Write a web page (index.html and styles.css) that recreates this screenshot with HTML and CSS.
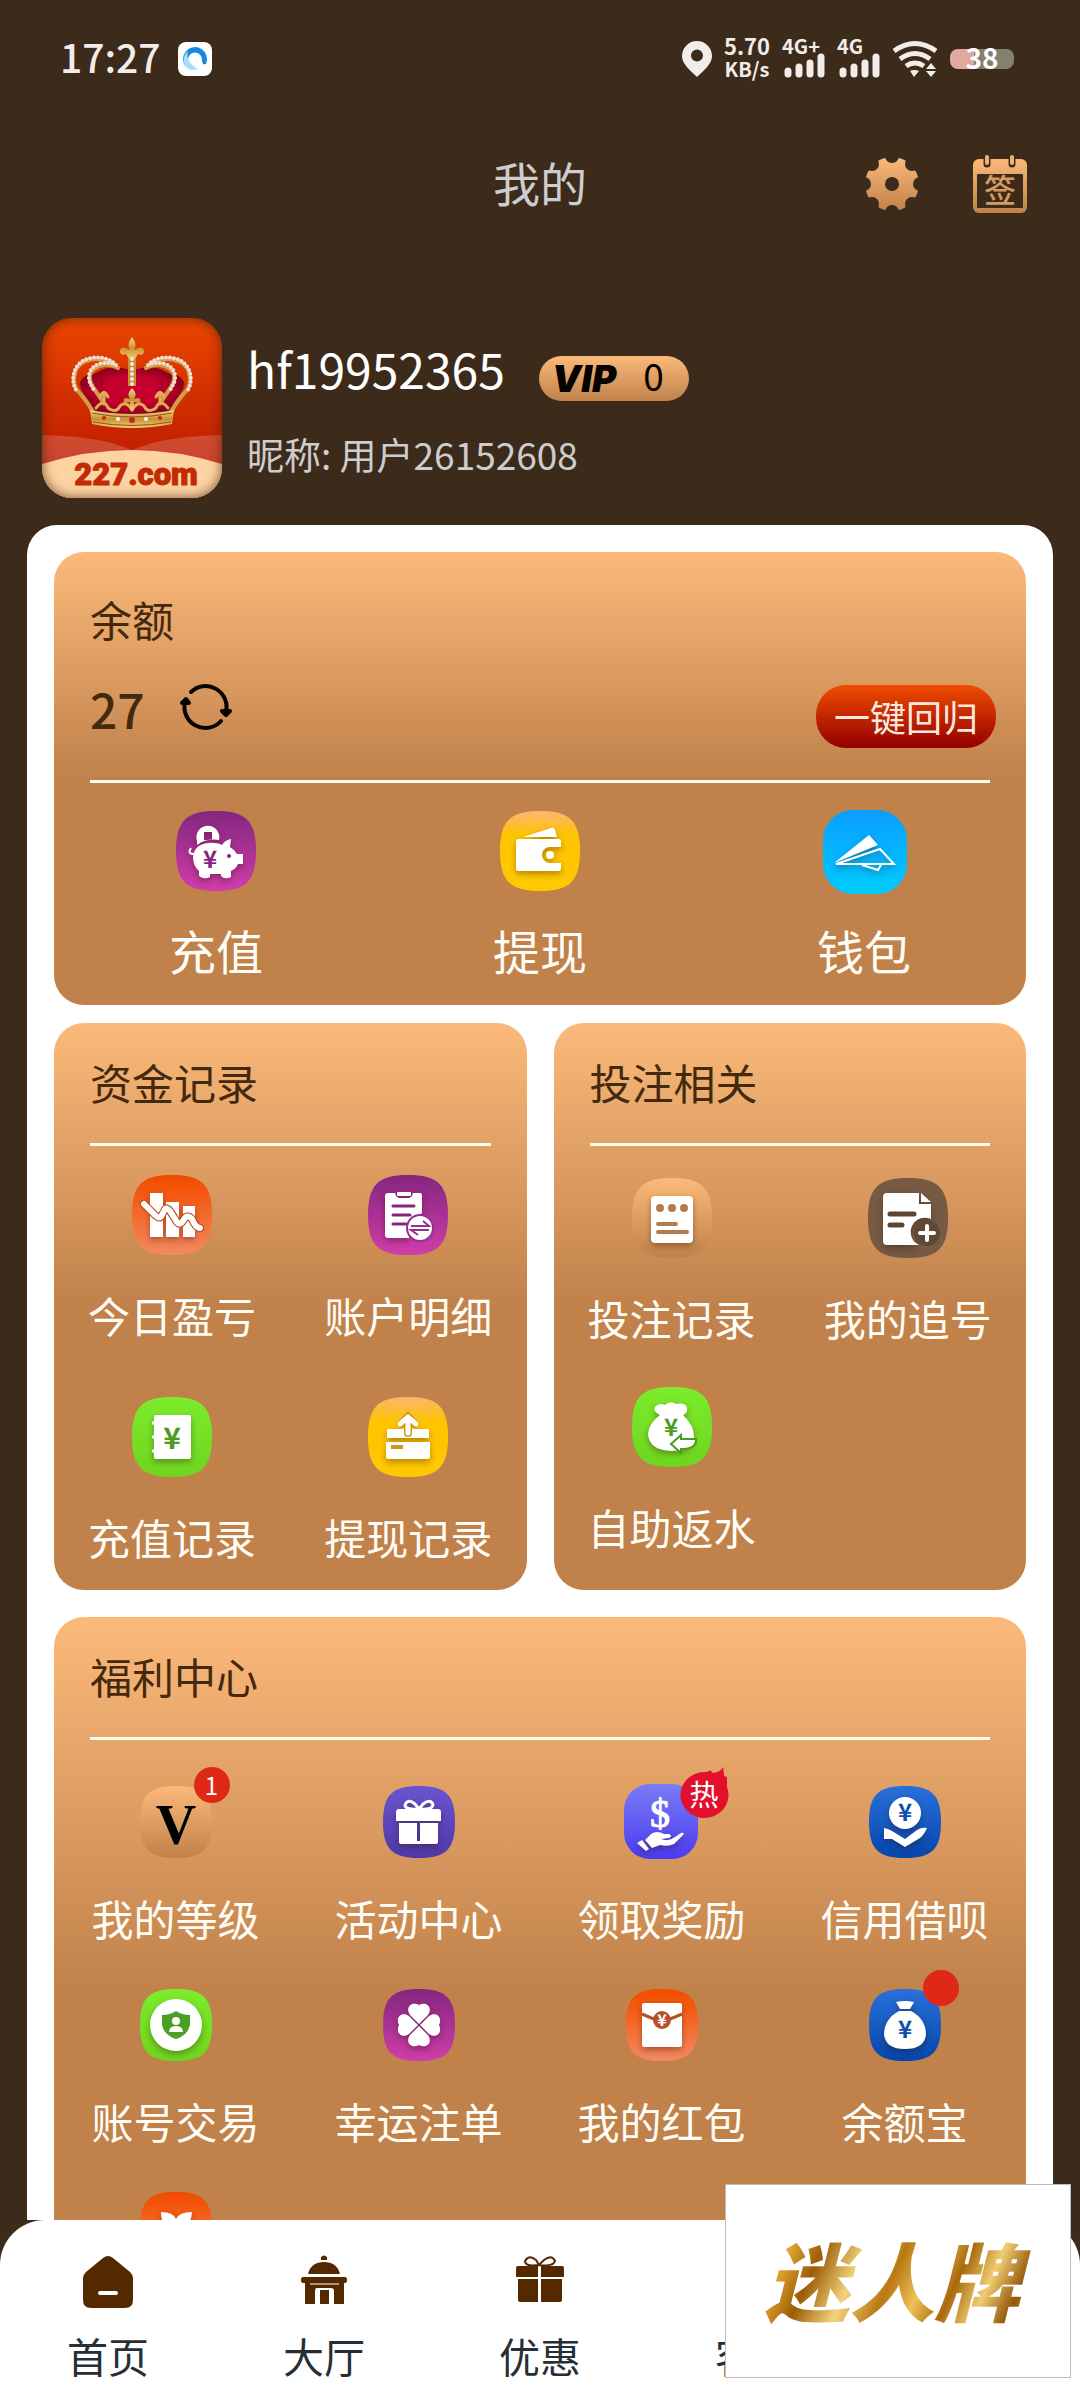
FILE: index.html
```html
<!DOCTYPE html>
<html lang="zh-CN">
<head>
    <meta charset="UTF-8">
    <meta name="viewport" content="width=device-width, initial-scale=1.0">
    <title>我的</title>
    <link rel="stylesheet" href="styles.css">
</head>
<body>
    <!-- 公共渐变和图标底板 -->
    <svg class="svg-defs" width="0" height="0" aria-hidden="true">
        <defs>
            <linearGradient id="g-gold" x1="0" y1="0" x2="0" y2="1"><stop offset="0" stop-color="#fbba7a"/><stop offset="1" stop-color="#c0814b"/></linearGradient>
            <linearGradient id="g-purple" x1="0" y1="0" x2="0" y2="1"><stop offset="0" stop-color="#84267f"/><stop offset="1" stop-color="#d03daa"/></linearGradient>
            <linearGradient id="g-yellow" x1="0" y1="0" x2="0" y2="1"><stop offset="0" stop-color="#fbb574"/><stop offset=".3" stop-color="#ffc400"/><stop offset="1" stop-color="#ffc800"/></linearGradient>
            <linearGradient id="g-sky" x1="0" y1="0" x2="0" y2="1"><stop offset="0" stop-color="#0a9dff"/><stop offset="1" stop-color="#00ccff"/></linearGradient>
            <linearGradient id="g-orange" x1="0" y1="0" x2="0" y2="1"><stop offset="0" stop-color="#f04d00"/><stop offset=".2" stop-color="#f4560d"/><stop offset="1" stop-color="#f28a62"/></linearGradient>
            <linearGradient id="g-green" x1="0" y1="0" x2="0" y2="1"><stop offset="0" stop-color="#7cec2c"/><stop offset="1" stop-color="#6fd41f"/></linearGradient>
            <linearGradient id="g-violet" x1="0" y1="0" x2="0" y2="1"><stop offset="0" stop-color="#6a55cf"/><stop offset="1" stop-color="#4f38a6"/></linearGradient>
            <linearGradient id="g-indigo" x1="0" y1="0" x2="0" y2="1"><stop offset="0" stop-color="#7b7bf5"/><stop offset="1" stop-color="#4a3cf0"/></linearGradient>
            <linearGradient id="g-blue" x1="0" y1="0" x2="0" y2="1"><stop offset="0" stop-color="#2a70da"/><stop offset="1" stop-color="#0546ac"/></linearGradient>
            <linearGradient id="g-red" x1="0" y1="0" x2="0" y2="1"><stop offset="0" stop-color="#ea4600"/><stop offset="1" stop-color="#b31200"/></linearGradient>
            <linearGradient id="g-crown" x1="0" y1="0" x2="0" y2="1"><stop offset="0" stop-color="#f6d98c"/><stop offset=".5" stop-color="#c98f35"/><stop offset="1" stop-color="#f3cf75"/></linearGradient>
            <radialGradient id="g-velvet"><stop offset="0" stop-color="#c80030"/><stop offset=".6" stop-color="#c4002c"/><stop offset="1" stop-color="#8f001d"/></radialGradient>
        </defs>
        <symbol id="tile" viewBox="0 0 80 80">
            <path d="M40 0C70 0 80 10 80 40S70 80 40 80 0 70 0 40 10 0 40 0Z"/>
        </symbol>
    </svg>

    <div class="app">
        <!-- 状态栏 -->
        <div class="status-bar">
            <div class="status-left">
                <span class="status-time">17:27</span>
                <svg width="34" height="34" viewBox="0 0 34 34">
                    <rect width="34" height="34" rx="8" fill="#fff"/>
                    <path d="M8 25A12 12 0 1 1 28 22C25 23 24 21 24 18A7 7 0 0 0 10 17C9 20 10 23 8 25Z" fill="#1b86e2"/>
                    <path d="M8 25C4 19 6 12 10 9C8 15 11 22 20 27C15 29 11 28 8 25Z" fill="#a9defb"/>
                </svg>
            </div>
            <div class="status-right">
                <svg width="30" height="36" viewBox="0 0 30 36"><path fill="#f2ecea" fill-rule="evenodd" d="M15 0A15 15 0 0 1 30 15C30 23 22 29 15 36C8 29 0 23 0 15A15 15 0 0 1 15 0ZM15 8.500A6 6 0 1 0 15 20.500A6 6 0 1 0 15 8.500Z"/></svg>
                <div class="net-speed"><span>5.70</span><span>KB/s</span></div>
                <svg class="signal" width="43" height="38" viewBox="0 0 43 38">
                    <text x="0" y="14">4G+</text>
                    <path d="M6 31V34M17 27V34M28 23V34M39 17V34"/>
                </svg>
                <svg class="signal" width="43" height="38" viewBox="0 0 43 38">
                    <text x="0" y="14">4G</text>
                    <path d="M6 31V34M17 27V34M28 23V34M39 17V34"/>
                </svg>
                <svg width="46" height="38" viewBox="0 0 46 38" fill="none" stroke="#f2ecea" stroke-width="5">
                    <path d="M2 11Q23 -4 44 11M8 19Q23 8 38 19M14 26Q23 20 32 26"/>
                    <path d="M18 31Q22 29 27 31L22 37ZM34 29L39 23L44 29ZM34 31H44L39 37Z" fill="#f2ecea" stroke="none"/>
                </svg>
                <div class="battery">38</div>
            </div>
        </div>

        <!-- 标题栏 -->
        <header class="app-bar">
            <h1>我的</h1>
            <div class="app-actions">
                <button class="icon-btn" aria-label="设置">
                    <svg width="54" height="54" viewBox="0 0 54 54">
                        <circle cx="27" cy="27" r="27" fill="url(#g-gold)"/>
                        <g fill="#3c2b1b">
                            <circle cx="27" cy="27" r="7"/>
                            <circle cx="27" cy="-1" r="7"/><circle cx="27" cy="55" r="7"/>
                            <circle cx="-1" cy="27" r="7"/><circle cx="55" cy="27" r="7"/>
                            <circle cx="7" cy="7" r="7"/><circle cx="47" cy="7" r="7"/>
                            <circle cx="7" cy="47" r="7"/><circle cx="47" cy="47" r="7"/>
                        </g>
                    </svg>
                </button>
                <button class="icon-btn" aria-label="签到">
                    <svg width="54" height="58" viewBox="0 0 54 58">
                        <rect y="4" width="54" height="54" rx="6" fill="url(#g-gold)"/>
                        <rect x="4" y="19" width="46" height="34" rx="1" fill="#3c2b1b"/>
                        <path d="M14 2V9M39 2V9" stroke="#3c2b1b" stroke-width="7" stroke-linecap="round"/>
                        <path d="M14 2V8M39 2V8" stroke="#efb076" stroke-width="4" stroke-linecap="round"/>
                        <text class="sign-text" x="27" y="47">签</text>
                    </svg>
                </button>
            </div>
        </header>

        <main class="content">
            <!-- 用户信息 -->
            <section class="profile">
                <div class="avatar">
                    <svg width="180" height="180" viewBox="0 0 180 180">
                        <rect width="180" height="180" fill="url(#g-red)"/>
                        <path d="M0 117Q60 118 92 133L180 160V180H0Z" fill="#fff" fill-opacity=".18"/>
                        <path d="M180 117Q120 118 88 133L0 160V180H180Z" fill="#fff" fill-opacity=".18"/>
                        <path d="M0 146Q90 118 180 146V180H0Z" fill="#fdd3a2"/>
                        <path d="M38 64C44 54 50 58 56 54C68 46 80 50 90 52C100 50 112 46 124 54C130 58 136 54 142 64C142 76 132 80 128 96H52C48 80 38 76 38 64Z" fill="url(#g-velvet)"/>
                        <path d="M60 62Q58 78 66 92M120 62Q122 78 114 92" fill="none" stroke="#7d0019" stroke-opacity=".5" stroke-width="2"/>
                        <g id="crown-side" fill="none" stroke-linecap="round">
                            <path d="M76 50C66 40 52 39 42 44C30 50 30 66 36 73C42 80 46 84 52 96M76 50C64 44 51 48 48 57C46 66 54 72 61 84" stroke="#d39b45" stroke-width="4"/>
                            <path d="M74 47C66 38 52 38 42 42C30 49 29 64 34 72M74 47C62 42 49 46 47 57C46 64 50 68 53 74" stroke="#f4dcd8" stroke-width="4" stroke-dasharray="0 4"/>
                            <path d="M54 90Q62 80 66 90Q74 96 78 88Q84 82 90 92M62 86V76M58 79Q62 70 66 79" stroke="#dfae54" stroke-width="3"/>
                        </g>
                        <use href="#crown-side" transform="matrix(-1 0 0 1 180 0)"/>
                        <path d="M90 19Q96 27 92 32Q102 26 102 34Q101 38 96 36L93 41H87L84 36Q79 38 78 34Q78 26 88 32Q84 27 90 19Z" fill="url(#g-crown)"/>
                        <path d="M90 40V68" stroke="#c98f35" stroke-width="8"/>
                        <path d="M90 41V68" stroke="#f8e6e2" stroke-width="4" stroke-linecap="round" stroke-dasharray="0 5"/>
                        <path d="M90 70Q96 76 92 81Q100 78 98 85L92 84V92H88V84L82 85Q80 78 88 81Q84 76 90 70Z" fill="url(#g-crown)"/>
                        <path d="M48 92Q90 100 132 92L130 106Q90 114 50 106Z" fill="url(#g-crown)"/>
                        <path d="M50 95Q90 103 130 95M51 104Q90 111 129 104" fill="none" stroke="#8f5716"/>
                        <g fill="#c12b16"><circle cx="62" cy="100" r="2"/><circle cx="90" cy="102" r="3"/><circle cx="118" cy="100" r="2"/></g>
                        <g fill="#fff1e0"><circle cx="76" cy="101" r="2"/><circle cx="104" cy="101" r="2"/></g>
                        <text class="avatar-text" x="94" y="167">227.com</text>
                    </svg>
                </div>
                <div class="profile-info">
                    <div class="name-row">
                        <span class="username">hf19952365</span>
                        <span class="vip-badge"><i>VIP</i><span>0</span></span>
                    </div>
                    <div class="nickname">昵称: 用户26152608</div>
                </div>
            </section>

            <div class="panel">
                <!-- 余额 -->
                <section class="card balance">
                    <h2>余额</h2>
                    <div class="balance-row">
                        <span class="amount">27</span>
                        <button class="icon-btn refresh" aria-label="刷新">
                            <svg width="52" height="44" viewBox="0 2 52 44" fill="none" stroke="#050200" stroke-width="4" stroke-linecap="round">
                                <path d="M11 9A21 21 0 0 1 46 29M41 38A21 21 0 0 1 5 19"/>
                                <path d="M42 28L46 32L50 28ZM2 20L6 16L9 20Z" fill="#050200" stroke-linejoin="round"/>
                            </svg>
                        </button>
                        <button class="return-btn">一键回归</button>
                    </div>
                    <div class="grid grid-3">
                        <a class="item" href="#">
                            <svg class="icon" viewBox="0 0 80 80">
                                <use href="#tile" fill="url(#g-purple)"/>
                                <g class="glyph">
                                    <path fill-rule="evenodd" d="M21 30A11.500 11.500 0 1 1 43 29Q31 27 21 34ZM28 21V29H36V21Z"/>
                                    <path d="M17 46C18 30 38 30 46 34Q49 29 55 28L54 36Q59 39 61 43H67V53H62Q60 58 55 60V66Q49 69 45 65V63H34V66Q28 69 23 65V60Q17 55 17 46Z"/>
                                    <path d="M18 43Q11 43 15 37" fill="none" stroke="#fff" stroke-width="2"/>
                                </g>
                                <circle cx="53" cy="45" r="2" fill="#84267f"/>
                                <text class="yen yen-purple" x="34" y="57">¥</text>
                            </svg>
                            <span>充值</span>
                        </a>
                        <a class="item" href="#">
                            <svg class="icon" viewBox="0 0 80 80">
                                <use href="#tile" fill="url(#g-yellow)"/>
                                <g class="glyph">
                                    <path d="M23 26L51 17Q54 16 55 19L57 26Z"/>
                                    <path d="M18 28H59Q61 28 61 30V36H50A8 8 0 0 0 50 52H61V57Q61 60 59 60H18Q16 60 16 57V31Q16 28 18 28Z"/>
                                    <circle cx="50" cy="44" r="4"/>
                                </g>
                            </svg>
                            <span>提现</span>
                        </a>
                        <a class="item" href="#">
                            <svg class="icon" viewBox="0 0 80 80">
                                <rect x="-1" y="-1" width="84" height="84" rx="30" fill="url(#g-sky)"/>
                                <g class="glyph">
                                    <path d="M45 24L10 52L54 34Z"/>
                                    <path d="M12 53L56 38L70 53ZM38 54L54 59L57 54" fill="none" stroke="#fff" stroke-width="2"/>
                                </g>
                            </svg>
                            <span>钱包</span>
                        </a>
                    </div>
                </section>

                <div class="card-row">
                    <!-- 资金记录 -->
                    <section class="card funds">
                        <h2>资金记录</h2>
                        <div class="grid grid-2">
                            <a class="item" href="#">
                                <svg class="icon" viewBox="0 0 80 80">
                                    <use href="#tile" fill="url(#g-orange)"/>
                                    <g class="glyph"><path d="M18 18H31V62H18ZM34 27H47V62H34ZM51 31H63V62H51Z"/></g>
                                    <g fill="none" stroke-linecap="round" stroke-linejoin="round">
                                        <path d="M12 29L23 40Q28 45 30 40L32 36Q34 31 38 36L45 47Q48 51 51 46Q55 38 60 44Q63 52 68 53" stroke="#b8481c" stroke-width="8"/>
                                        <path d="M12 29L23 40Q28 45 30 40L32 36Q34 31 38 36L45 47Q48 51 51 46Q55 38 60 44Q63 52 68 53" stroke="#fff" stroke-width="6"/>
                                    </g>
                                </svg>
                                <span>今日盈亏</span>
                            </a>
                            <a class="item" href="#">
                                <svg class="icon" viewBox="0 0 80 80">
                                    <use href="#tile" fill="url(#g-purple)"/>
                                    <g class="glyph"><path d="M20 18H27Q28 23 32 23H40Q44 23 45 18H52Q54 18 54 20V38L41 50V63H20Q17 63 17 60V21Q17 18 20 18Z"/><rect x="29" y="17" width="14" height="4" rx="1"/></g>
                                    <path d="M25 31H46M25 40H42M25 49H38" stroke="#84267f" stroke-width="3" stroke-linecap="round"/>
                                    <circle cx="52" cy="53" r="13" fill="#fff" stroke="#96308f" stroke-width="2"/>
                                    <path d="M43 51H61L55 46M61 55H43L50 60" fill="none" stroke="#96308f" stroke-width="2"/>
                                </svg>
                                <span>账户明细</span>
                            </a>
                            <a class="item" href="#">
                                <svg class="icon" viewBox="0 0 80 80">
                                    <use href="#tile" fill="url(#g-green)"/>
                                    <g class="glyph"><rect x="22" y="18" width="37" height="44" rx="2"/><circle cx="22" cy="26" r="2"/><circle cx="22" cy="40" r="2"/><circle cx="22" cy="54" r="2"/></g>
                                    <text class="yen yen-green yen-lg" x="40" y="52">¥</text>
                                </svg>
                                <span>充值记录</span>
                            </a>
                            <a class="item" href="#">
                                <svg class="icon" viewBox="0 0 80 80">
                                    <use href="#tile" fill="url(#g-yellow)"/>
                                    <g class="glyph"><path d="M19 32H61V41H19ZM18 45H62V60Q62 62 60 62H20Q18 62 18 60Z"/></g>
                                    <path d="M40 36V22M33 27L40 20L47 27" fill="none" stroke="#c89a12" stroke-width="8" stroke-linecap="round"/>
                                    <path d="M40 36V22M32 27L40 20L48 27" fill="none" stroke="#fff" stroke-width="5" stroke-linecap="round"/>
                                    <path d="M23 48H35V52H23Z" fill="#c89a12"/>
                                </svg>
                                <span>提现记录</span>
                            </a>
                        </div>
                    </section>

                    <!-- 投注相关 -->
                    <section class="card bets">
                        <h2>投注相关</h2>
                        <div class="grid grid-2">
                            <a class="item" href="#">
                                <svg class="icon" viewBox="0 0 80 80">
                                    <use href="#tile" fill="url(#g-gold)"/>
                                    <g class="glyph"><rect x="19" y="18" width="42" height="47" rx="4"/></g>
                                    <g fill="#b07c4e"><circle cx="28" cy="30" r="4"/><circle cx="40" cy="30" r="4"/><circle cx="52" cy="30" r="4"/></g>
                                    <path d="M26 46H44M26 54H55" stroke="#b07c4e" stroke-width="4" stroke-linecap="round"/>
                                </svg>
                                <span>投注记录</span>
                            </a>
                            <a class="item" href="#">
                                <svg class="icon" viewBox="0 0 80 80">
                                    <use href="#tile" fill="#765a43"/>
                                    <g class="glyph"><path d="M19 15H51V26H63V41A14 14 0 0 0 51 67H19Q15 67 15 63V19Q15 15 19 15ZM53 15L63 24H53Z"/></g>
                                    <path d="M22 36H46M22 47H34" stroke="#5b4533" stroke-width="5" stroke-linecap="round"/>
                                    <circle cx="59" cy="55" r="13" fill="#5f4835"/>
                                    <path d="M59 48V62M52 55H66" stroke="#fff" stroke-width="4" stroke-linecap="round"/>
                                </svg>
                                <span>我的追号</span>
                            </a>
                            <a class="item" href="#">
                                <svg class="icon" viewBox="0 0 80 80">
                                    <use href="#tile" fill="url(#g-green)"/>
                                    <g class="glyph"><path d="M28 28Q21 25 23 20Q27 15 33 18Q38 13 44 17Q54 15 55 21Q56 26 51 28Q63 39 62 52Q57 64 39 64Q17 63 16 47Q17 36 28 28Z"/></g>
                                    <text class="yen yen-green" x="39" y="49">¥</text>
                                    <path d="M39 57L49 48V52H64Q65 62 49 62V66Z" fill="#fff" stroke="#4d9a1f" stroke-width="2"/>
                                </svg>
                                <span>自助返水</span>
                            </a>
                        </div>
                    </section>
                </div>

                <!-- 福利中心 -->
                <section class="card welfare">
                    <h2>福利中心</h2>
                    <div class="grid grid-4">
                        <a class="item" href="#">
                            <span class="icon-wrap">
                                <svg class="icon" viewBox="0 0 72 72">
                                    <use href="#tile" fill="url(#g-gold)"/>
                                    <text class="level-v" x="36" y="58">V</text>
                                </svg>
                                <b class="badge">1</b>
                            </span>
                            <span>我的等级</span>
                        </a>
                        <a class="item" href="#">
                            <svg class="icon" viewBox="0 0 72 72">
                                <use href="#tile" fill="url(#g-violet)"/>
                                <g class="glyph">
                                    <path d="M16 23H55Q58 23 58 26V35H13V26Q13 23 16 23ZM16 37H34V55H37V37H55V56Q55 58 53 58H18Q16 58 16 56Z"/>
                                    <path d="M36 23Q22 24 22 19Q25 12 32 18L36 23L40 18Q48 12 50 19Q49 24 36 23" fill="none" stroke="#fff" stroke-width="3"/>
                                </g>
                            </svg>
                            <span>活动中心</span>
                        </a>
                        <a class="item" href="#">
                            <span class="icon-wrap">
                                <svg class="icon" viewBox="0 0 72 72">
                                    <rect x="-2" y="-2" width="74" height="75" rx="26" fill="url(#g-indigo)"/>
                                    <text class="dollar" x="34" y="41">$</text>
                                    <g class="glyph"><path d="M25 48Q31 44 38 48H43Q47 50 43 52L35 53Q43 56 49 51L55 47Q59 46 57 49L48 58Q42 61 34 59L26 62L19 54ZM16 54L23 63L20 65L11 57Z"/></g>
                                </svg>
                                <svg class="hot" width="48" height="51" viewBox="0 0 48 51">
                                    <path d="M24 5Q29 5 30 3L33 6Q41 5 43 0Q44 6 44 9L47 10V20A24 23 0 1 1 24 5Z" fill="#e20f2d"/>
                                    <text x="24" y="39">热</text>
                                </svg>
                            </span>
                            <span>领取奖励</span>
                        </a>
                        <a class="item" href="#">
                            <svg class="icon" viewBox="0 0 72 72">
                                <use href="#tile" fill="url(#g-blue)"/>
                                <g class="glyph"><circle cx="36" cy="27" r="16"/><path d="M15 42Q20 43 23 45L36 53L48 44Q53 41 58 42Q55 49 51 52L36 61L23 53L15 53Z"/></g>
                                <text class="yen yen-blue" x="36" y="35">¥</text>
                            </svg>
                            <span>信用借呗</span>
                        </a>
                        <a class="item" href="#">
                            <svg class="icon" viewBox="0 0 72 72">
                                <use href="#tile" fill="url(#g-green)"/>
                                <g class="glyph"><circle cx="36" cy="36" r="26"/></g>
                                <path d="M36 22Q42 26 50 26V36Q48 46 36 50Q24 46 22 36V26Q30 26 36 22Z" fill="#4c9f22"/>
                                <circle cx="36" cy="32" r="4" fill="#fff"/><path d="M29 43Q29 37 36 37T43 43Z" fill="#fff"/>
                            </svg>
                            <span>账号交易</span>
                        </a>
                        <a class="item" href="#">
                            <svg class="icon" viewBox="0 0 72 72">
                                <use href="#tile" fill="url(#g-purple)"/>
                                <g class="glyph">
                                    <path id="petal" d="M36 35L27 26C22 19 28 12 36 16C44 12 50 19 45 26Z"/>
                                    <use href="#petal" transform="rotate(90 36 36)"/>
                                    <use href="#petal" transform="rotate(180 36 36)"/>
                                    <use href="#petal" transform="rotate(270 36 36)"/>
                                </g>
                            </svg>
                            <span>幸运注单</span>
                        </a>
                        <a class="item" href="#">
                            <svg class="icon" viewBox="0 0 72 72">
                                <use href="#tile" fill="url(#g-orange)"/>
                                <g class="glyph"><rect x="16" y="14" width="40" height="44" rx="2"/></g>
                                <path d="M16 25L30 31H42L56 25" fill="none" stroke="#b64f2b" stroke-width="3"/>
                                <circle cx="36" cy="31" r="9" fill="#b64f2b"/>
                                <text class="yen yen-white yen-sm" x="36" y="37">¥</text>
                            </svg>
                            <span>我的红包</span>
                        </a>
                        <a class="item" href="#">
                            <span class="icon-wrap">
                                <svg class="icon" viewBox="0 0 72 72">
                                    <use href="#tile" fill="url(#g-blue)"/>
                                    <g class="glyph"><path d="M27 13Q36 11 45 13L41 20H31ZM30 22H42Q57 30 57 46Q55 60 36 60T15 46Q15 30 30 22Z"/></g>
                                    <text class="yen yen-blue" x="36" y="49">¥</text>
                                </svg>
                                <b class="badge"></b>
                            </span>
                            <span>余额宝</span>
                        </a>
                        <a class="item" href="#" aria-label="更多福利">
                            <svg class="icon" viewBox="0 0 72 72">
                                <use href="#tile" fill="url(#g-orange)"/>
                                <g class="glyph"><path d="M21 20Q33 20 36 27Q39 20 52 20Q51 36 38 38V56H34V38Q21 36 21 20Z"/></g>
                            </svg>
                        </a>
                    </div>
                </section>
            </div>
        </main>

        <!-- 底部导航 -->
        <nav class="tab-bar">
            <a class="tab" href="#">
                <svg width="54" height="54" viewBox="0 0 54 54">
                    <path d="M22 3Q27 -1 32 3L49 17Q52 20 52 23V45Q52 53 44 53H10Q2 53 2 45V23Q2 20 5 17Z" fill="#552900"/>
                    <path d="M19 38H35" stroke="#fff" stroke-width="4" stroke-linecap="round"/>
                </svg>
                <span>首页</span>
            </a>
            <a class="tab" href="#">
                <svg width="54" height="54" viewBox="0 0 54 54" fill="#552900">
                    <path d="M24 5V2Q27 -1 30 2V5ZM11 19Q14 7 27 7T43 19ZM6 22H48Q50 22 50 25T48 28H47V49H37V36Q37 33 34 33H20Q18 33 18 36V49H8V28H6Q4 28 4 25T6 22ZM23 35H32V49H23Z"/>
                    <path d="M13 29H42" stroke="#fff"/>
                </svg>
                <span>大厅</span>
            </a>
            <a class="tab" href="#">
                <svg width="54" height="54" viewBox="0 0 54 54" fill="#552900">
                    <path d="M5 11H25V22H3V13Q3 11 5 11ZM28 11H49Q51 11 51 13V22H28ZM5 24H25V47H7Q5 47 5 45ZM28 24H49V45Q49 47 47 47H28Z"/>
                    <path d="M26 10Q12 12 12 6Q16 -1 23 5L26 10L31 5Q39 -1 42 6Q40 12 26 10" fill="none" stroke="#552900" stroke-width="2"/>
                </svg>
                <span>优惠</span>
            </a>
            <a class="tab" href="#">
                <svg width="54" height="54" viewBox="0 0 54 54" fill="none" stroke="#552900" stroke-width="5"><path d="M8 34V24A19 19 0 0 1 46 24V34M46 34Q44 46 30 46"/></svg>
                <span>客服</span>
            </a>
            <a class="tab" href="#">
                <svg width="54" height="54" viewBox="0 0 54 54" fill="#552900"><circle cx="27" cy="14" r="11"/><path d="M6 48Q6 28 27 28T48 48Z"/></svg>
                <span>我的</span>
            </a>
        </nav>

        <!-- 悬浮广告 -->
        <div class="float-logo"><span>迷人牌</span></div>
    </div>
</body>
</html>
```
FILE: styles.css
```css
* {
    margin: 0;
    padding: 0;
    box-sizing: border-box;
}

body {
    font-family: 'Noto Sans CJK SC', 'Noto Sans', sans-serif;
    background: #3c2b1b;
}

a {
    text-decoration: none;
    color: inherit;
}

button {
    border: none;
    font-family: inherit;
    cursor: pointer;
}

svg {
    display: block;
    flex-shrink: 0;
    overflow: visible;
}

.svg-defs {
    position: absolute;
}

.app {
    position: relative;
    display: flex;
    flex-direction: column;
    height: 100vh;
    overflow: hidden;
}

/* 状态栏 */
.status-bar {
    display: flex;
    justify-content: space-between;
    align-items: center;
    height: 117px;
    padding: 0 66px 0 60px;
    flex-shrink: 0;
    color: #f2ecea;
}

.status-left {
    display: flex;
    align-items: center;
    gap: 17px;
}

.status-time {
    padding-bottom: 5px;
    font-size: 39px;
    font-weight: 500;
}

.status-right {
    display: flex;
    align-items: center;
    gap: 12px;
}

.net-speed {
    display: flex;
    flex-direction: column;
    align-items: center;
    width: 46px;
    padding-bottom: 3px;
    font-size: 22px;
    line-height: 23px;
    font-weight: bold;
}

.net-speed span:last-child {
    font-size: 20px;
}

.signal text {
    font-size: 20px;
    font-weight: bold;
    fill: #f2ecea;
}

.signal path {
    stroke: #f2ecea;
    stroke-width: 7;
    stroke-linecap: round;
}

.battery {
    width: 64px;
    height: 20px;
    border-radius: 8px;
    background: linear-gradient(90deg, #dfa9a0 24px, #84806f 24px);
    color: #fff;
    font-size: 28px;
    line-height: 16px;
    font-weight: bold;
    text-align: center;
}

/* 标题栏 */
.app-bar {
    position: relative;
    display: flex;
    justify-content: center;
    align-items: center;
    height: 134px;
    flex-shrink: 0;
}

.app-bar h1 {
    padding-bottom: 6px;
    font-size: 47px;
    font-weight: normal;
    color: #cdcdcf;
}

.app-actions {
    position: absolute;
    right: 53px;
    display: flex;
    align-items: center;
    gap: 54px;
}

.icon-btn {
    background: none;
}

.sign-text {
    font-size: 32px;
    font-weight: 500;
    text-anchor: middle;
    fill: #d89a63;
}

.content {
    flex: 1;
    min-height: 0;
    overflow-y: auto;
    scrollbar-width: none;
}

/* 用户信息 */
.profile {
    display: flex;
    gap: 25px;
    padding: 67px 42px 27px;
}

.avatar {
    position: relative;
    border-radius: 30px;
    overflow: hidden;
}

.avatar::after {
    content: '';
    position: absolute;
    inset: 0;
    border-radius: 30px;
    box-shadow: inset 0 0 12px rgba(60, 30, 10, 0.7);
}

.avatar-text {
    font-family: 'Roboto', sans-serif;
    font-size: 31px;
    font-weight: 900;
    text-anchor: middle;
    fill: #c22c05;
    stroke: #c22c05;
}

.profile-info {
    padding-top: 20px;
}

.name-row {
    display: flex;
    align-items: flex-end;
    gap: 34px;
    margin-bottom: 28px;
}

.username {
    padding-bottom: 3px;
    font-size: 48px;
    line-height: 60px;
    color: #fff;
}

.vip-badge {
    display: flex;
    justify-content: space-between;
    align-items: center;
    width: 150px;
    height: 45px;
    padding: 0 25px 0 13px;
    border-radius: 23px;
    background: linear-gradient(#fbba7a, #c0814b);
    color: #050200;
    font-size: 37px;
}

.vip-badge span {
    align-self: flex-start;
    line-height: 38px;
}

.vip-badge i {
    font-family: 'Inter', sans-serif;
    font-weight: 900;
}

.nickname {
    font-size: 37px;
    line-height: 50px;
    color: #cdcdcf;
}

/* 卡片 */
.panel {
    margin: 0 27px;
    padding: 27px;
    border-radius: 30px 30px 0 0;
    background: #fff;
}

.card {
    padding-top: 34px;
    border-radius: 30px;
    background: linear-gradient(#fbba7a, #c0814b 50%);
}

.card h2 {
    margin: 0 36px;
    padding-bottom: 36px;
    border-bottom: 3px solid #fffdf0;
    font-size: 42px;
    line-height: 50px;
    font-weight: normal;
    color: #43290d;
}

.card-row {
    display: flex;
    gap: 27px;
    margin: 18px 0 27px;
}

.card-row .card {
    flex: 1;
}

.grid {
    display: grid;
}

.grid-2 {
    grid-template-columns: repeat(2, 1fr);
}

.grid-3 {
    grid-template-columns: repeat(3, 1fr);
}

.grid-4 {
    grid-template-columns: repeat(4, 1fr);
}

.item {
    display: flex;
    flex-direction: column;
    align-items: center;
    gap: 35px;
    font-size: 42px;
    line-height: 50px;
    color: #fffdf5;
}

.icon {
    width: 80px;
    height: 80px;
}

.icon-wrap {
    position: relative;
}

.glyph {
    fill: #fff;
    filter: drop-shadow(0 3px 3px rgba(40, 10, 0, 0.35));
}

.yen {
    font-size: 24px;
    font-weight: bold;
    text-anchor: middle;
}

.yen-lg {
    font-size: 30px;
}

.yen-sm {
    font-size: 16px;
}

.yen-purple {
    fill: #84267f;
}

.yen-green {
    fill: #4d9a1f;
}

.yen-blue {
    fill: #0f4fae;
}

.yen-white {
    fill: #fff;
}

/* 余额 */
.balance {
    padding: 42px 0 27px;
}

.balance h2 {
    padding-bottom: 0;
    border-bottom: none;
}

.balance-row {
    display: flex;
    align-items: flex-start;
    margin: 41px 36px 28px;
    padding-bottom: 32px;
    border-bottom: 3px solid #fffdf0;
}

.amount {
    font-size: 48px;
    line-height: 46px;
    font-weight: 500;
    color: #43290d;
}

.refresh {
    margin-left: 35px;
}

.return-btn {
    margin: 0 -6px 0 auto;
    width: 180px;
    height: 63px;
    border-radius: 30px;
    background: linear-gradient(#f04c00, #930000);
    color: #fbe9e0;
    font-size: 36px;
    line-height: 63px;
}

.balance .item {
    gap: 31px;
    font-size: 47px;
    line-height: 56px;
}

.funds .grid {
    row-gap: 57px;
    padding: 29px 0 28px;
}

.bets .grid {
    row-gap: 44px;
    padding-top: 32px;
}

/* 福利中心 */
.welfare .grid {
    row-gap: 46px;
    padding: 46px 0 113px;
}

.welfare .icon {
    width: 72px;
    height: 72px;
}

.badge {
    position: absolute;
    top: -19px;
    right: -18px;
    width: 36px;
    height: 36px;
    border-radius: 50%;
    background: #df2818;
    color: #fff;
    font-size: 24px;
    line-height: 36px;
    font-weight: normal;
    text-align: center;
}

.hot {
    position: absolute;
    top: -19px;
    right: -30px;
}

.hot text {
    font-size: 29px;
    text-anchor: middle;
    fill: #fff;
}

.level-v {
    font-family: 'Liberation Serif', serif;
    font-size: 56px;
    font-weight: bold;
    text-anchor: middle;
}

.dollar {
    font-family: 'Liberation Serif', serif;
    font-size: 40px;
    text-anchor: middle;
    fill: #fff;
    stroke: #fff;
}

/* 底部导航 */
.tab-bar {
    display: flex;
    height: 180px;
    padding-top: 35px;
    flex-shrink: 0;
    border-radius: 45px 45px 0 0;
    background: #fff;
}

.tab {
    flex: 1;
    display: flex;
    flex-direction: column;
    align-items: center;
    gap: 21px;
    font-size: 41px;
    line-height: 50px;
    color: #262f35;
}

/* 悬浮广告 */
.float-logo {
    position: absolute;
    right: 9px;
    bottom: 22px;
    display: flex;
    justify-content: center;
    align-items: center;
    width: 346px;
    height: 194px;
    padding: 0 12px 6px 0;
    border: 1px solid #bdbdbd;
    background: #fff;
}

.float-logo span {
    padding: 0 12px;
    font-size: 85px;
    line-height: 110px;
    font-weight: 900;
    font-style: italic;
    color: transparent;
    background: linear-gradient(115deg, #a8690c, #e0a530 15%, #9c5c06 25%, #f3d37c 38%, #b97812 50%, #eec15a 60%, #a8690c 70%, #f0cd73 80%, #94590a 90%, #d99b28);
    -webkit-background-clip: text;
    background-clip: text;
}
```
